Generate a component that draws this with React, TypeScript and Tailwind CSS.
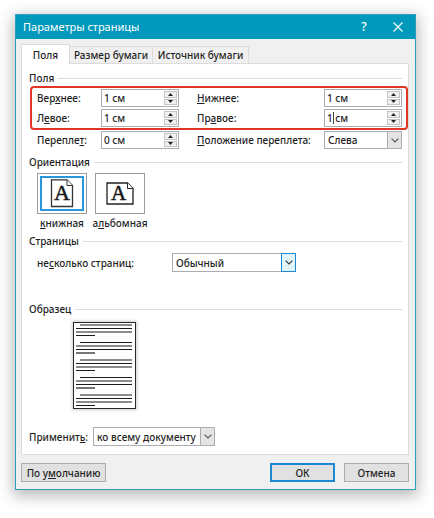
import { useState, type ReactNode } from "react";

function Key({ children }: { children: ReactNode }) {
  return <span className="underline decoration-1 underline-offset-1">{children}</span>;
}

function Heading({ children }: { children: ReactNode }) {
  return (
    <div className="flex h-4 items-center gap-1">
      <h2>{children}</h2>
      <div className="h-px flex-1 bg-[#dcdcdc]" />
    </div>
  );
}

function Spin({ id, value, focused = false }: { id: string; value: string; focused?: boolean }) {
  return (
    <div className="relative flex h-[18px] w-[78px] border border-[#abadb3] bg-white p-px">
      <input id={id} defaultValue={value} className="w-0 min-w-0 flex-1 bg-transparent pl-px outline-none" />
      {focused && <span className="absolute top-[2px] left-2 h-3 w-px bg-[#444]" />}
      <div className="flex w-[13px] flex-col gap-px">
        <button
          type="button"
          aria-label="+"
          className="flex flex-1 items-center justify-center border border-[#c4c4c4] bg-[#f0f0f0]"
        >
          <svg width="5" height="3" viewBox="0 0 5 3">
            <path d="M0 3L2.5 0L5 3Z" fill="#222" />
          </svg>
        </button>
        <button
          type="button"
          aria-label="−"
          className="flex flex-1 items-center justify-center border border-[#c4c4c4] bg-[#f0f0f0]"
        >
          <svg width="5" height="3" viewBox="0 0 5 3">
            <path d="M0 0L2.5 3L5 0Z" fill="#222" />
          </svg>
        </button>
      </div>
    </div>
  );
}

function Dropdown({ id, value, box, arrow }: { id: string; value: string; box: string; arrow: string }) {
  return (
    <div className={`relative ${box}`}>
      <select id={id} className="block h-full w-full appearance-none border border-[#abadb3] bg-white pl-[3px] outline-none">
        <option>{value}</option>
      </select>
      <span className={`pointer-events-none absolute inset-y-0 right-0 flex w-[15px] items-center justify-center border ${arrow}`}>
        <svg width="8" height="5" viewBox="0 0 8 5" fill="none" stroke="currentColor" strokeWidth="1.1">
          <path d="M0.6 0.6L4 4L7.4 0.6" />
        </svg>
      </span>
    </div>
  );
}

function PortraitIcon() {
  return (
    <svg width="24" height="29" viewBox="0 0 24 29" className="overflow-visible">
      <path d="M1.500 0.800H17L22.500 6.500V27.500H1.500Z" fill="#fff" stroke="#333" strokeWidth="1.3" />
      <path d="M17 1V6.500H22.500" fill="#fff" stroke="#333" />
      <text x="12" y="21" textAnchor="middle" fontSize="22" fontWeight="400" fill="#151515" stroke="#151515" strokeWidth="0.5" className="font-['Liberation_Serif',serif]">
        A
      </text>
    </svg>
  );
}

function LandscapeIcon() {
  return (
    <svg width="28" height="23" viewBox="0 0 28 23" className="overflow-visible">
      <path d="M1 1H21.500L27 6.500V22H1Z" fill="#fff" stroke="#222" strokeWidth="1.3" />
      <path d="M21.500 1V6.500H27" fill="#fff" stroke="#222" />
      <text x="12.500" y="18" textAnchor="middle" fontSize="21" fontWeight="400" fill="#151515" stroke="#151515" strokeWidth="0.5" className="font-['Liberation_Serif',serif]">
        A
      </text>
    </svg>
  );
}

function SamplePage() {
  const lines = Array.from({ length: 24 }, (_, i) => i).filter((i) => i % 5 !== 4);
  return (
    <svg width="63" height="87" viewBox="0 0 63 87" className="shadow-[0_0_3px_1px_rgba(0,0,0,0.2)]">
      <rect x="0.500" y="0.500" width="62" height="86" fill="#fff" stroke="#25252c" />
      {lines.map((i) => (
        <line
          key={i}
          x1={i % 5 === 0 ? 7 : 3}
          x2={i % 5 === 3 ? 22 : 59}
          y1={3 + i * 3.5}
          y2={3 + i * 3.5}
          stroke="#1a1a1a"
          strokeWidth={i % 2 === 0 ? 1.2 : 1}
        />
      ))}
    </svg>
  );
}

export default function App() {
  const [orientation, setOrientation] = useState("portrait");
  return (
    <main className="min-h-screen bg-white pt-[14px] pr-[18px] pb-7 pl-[15px] font-['Noto_Sans',sans-serif] text-[10px] leading-4 font-medium text-[#1e1e24]">
      <div role="dialog" aria-labelledby="title" className="border border-[#2f9fbd] bg-[#f0f0f0] shadow-[0_4px_14px_2px_rgba(0,0,0,0.28)]">
        <header className="flex h-6 items-center bg-[#0099bc] pr-[12px] pl-[7px] text-white">
          <h1 id="title" className="flex-1 text-[11px] font-normal">
            Параметры страницы
          </h1>
          <button type="button" className="w-4 text-xs" aria-label="Справка">
            ?
          </button>
          <button type="button" aria-label="Закрыть" className="ml-[21px]">
            <svg width="10" height="10" viewBox="0 0 10 10" stroke="#fff" strokeWidth="1.1">
              <path d="M0.500 0.500L9.500 9.500M9.500 0.500L0.500 9.500" />
            </svg>
          </button>
        </header>

        <div className="pt-[5px] pr-[6px] pb-[7px] pl-[5px]">
          <div role="tablist" className="relative flex items-end">
            <button role="tab" type="button" aria-selected="true" className="-mb-px h-5 w-[49px] border border-b-0 border-[#dcdcdc] bg-white">
              Поля
            </button>
            <button role="tab" type="button" aria-selected="false" className="h-[17px] w-[83px] border border-b-0 border-l-0 border-[#dcdcdc]">
              Размер бумаги
            </button>
            <button role="tab" type="button" aria-selected="false" className="h-[17px] w-24 border border-b-0 border-l-0 border-[#dcdcdc]">
              Источник бумаги
            </button>
          </div>

          <div role="tabpanel" className="border border-[#dcdcdc] bg-white pt-[6px] pr-[6px] pb-2 pl-[7px]">
            <Heading>Поля</Heading>
            <div className="relative mt-[3px] flex flex-col gap-[2px] pl-2">
              <div className="flex items-center">
                <label htmlFor="top" className="w-16">
                  Вер<Key>х</Key>нее:
                </label>
                <Spin id="top" value="1 см" />
                <label htmlFor="bottom" className="flex-1 pl-[18px]">
                  <Key>Н</Key>ижнее:
                </label>
                <Spin id="bottom" value="1 см" />
              </div>
              <div className="flex items-center">
                <label htmlFor="left" className="w-16">
                  Л<Key>е</Key>вое:
                </label>
                <Spin id="left" value="1 см" />
                <label htmlFor="right" className="flex-1 pl-[18px]">
                  Пр<Key>а</Key>вое:
                </label>
                <Spin id="right" value="1 см" focused />
              </div>
              <div className="pointer-events-none absolute -inset-y-[3px] -right-[6px] left-px rounded-[4px] border-2 border-[#e13527]" />
            </div>
            <div className="mt-1 flex items-center pl-2">
              <label htmlFor="gutter" className="w-16">
                Перепле<Key>т</Key>:
              </label>
              <Spin id="gutter" value="0 см" />
              <label htmlFor="side" className="flex-1 pl-[18px]">
                <Key>П</Key>оложение переплета:
              </label>
              <Dropdown id="side" value="Слева" box="h-[18px] w-[78px]" arrow="border-[#abadb3] bg-[#e4e4e4] text-[#555]" />
            </div>

            <div className="mt-[5px]">
              <Heading>Ориентация</Heading>
              <div className="mt-[3px] flex gap-2 pl-2">
                {[
                  { id: "portrait", icon: <PortraitIcon />, text: <><Key>к</Key>нижная</> },
                  { id: "landscape", icon: <LandscapeIcon />, text: <>а<Key>л</Key>ьбомная</> },
                ].map((o) => (
                  <label key={o.id} className="flex w-[50px] flex-col items-center whitespace-nowrap">
                    <input
                      type="radio"
                      name="orientation"
                      className="sr-only"
                      checked={orientation === o.id}
                      onChange={() => setOrientation(o.id)}
                    />
                    <span className="flex h-[41px] w-full border border-[#9c9c9c] p-[2px]">
                      <span
                        className={`flex flex-1 items-center justify-center border-2 ${
                          orientation === o.id ? "border-[#2a97dc]" : "border-transparent"
                        }`}
                      >
                        {o.icon}
                      </span>
                    </span>
                    <span className="mt-px">{o.text}</span>
                  </label>
                ))}
              </div>
            </div>

            <div className="mt-[2px]">
              <Heading>Страницы</Heading>
              <div className="mt-1 flex items-center pl-2">
                <label htmlFor="pages" className="w-[135px]">
                  не<Key>с</Key>колько страниц:
                </label>
                <Dropdown id="pages" value="Обычный" box="h-[19px] w-[124px]" arrow="border-[#1b88d4] bg-[#dff4fb] text-[#333]" />
              </div>
            </div>

            <div className="mt-[29px]">
              <Heading>Образец</Heading>
              <div className="mt-[5px] flex pl-11">
                <SamplePage />
              </div>
            </div>

            <div className="mt-[18px] flex items-center">
              <label htmlFor="apply" className="w-16">
                Применит<Key>ь</Key>:
              </label>
              <Dropdown id="apply" value="ко всему документу" box="h-[19px] w-[122px]" arrow="border-[#abadb3] bg-[#e4e4e4] text-[#555]" />
            </div>
          </div>

          <footer className="mt-2 flex items-center gap-[9px]">
            <button type="button" className="mr-auto h-[19px] w-[85px] border border-[#adadad] bg-[#e1e1e1]">
              По у<Key>м</Key>олчанию
            </button>
            <button type="button" className="h-[19px] w-[65px] border-2 border-[#1b88d4] bg-[#e1e1e1] leading-3">
              ОК
            </button>
            <button type="button" className="h-[19px] w-[65px] border border-[#adadad] bg-[#e1e1e1]">
              Отмена
            </button>
          </footer>
        </div>
      </div>
    </main>
  );
}
